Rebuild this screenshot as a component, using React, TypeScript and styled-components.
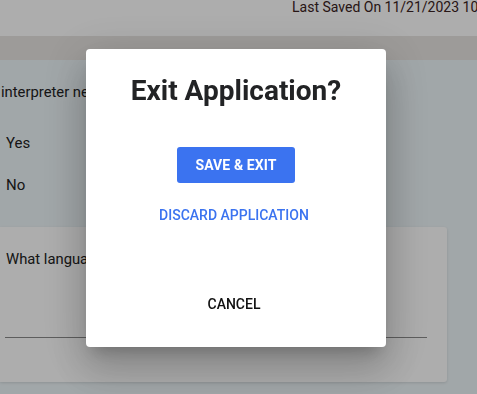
import React from "react";
import styled, { createGlobalStyle } from "styled-components";

const Global = createGlobalStyle`
  html, body { margin: 0; padding: 0; }
  body {
    width: 477px;
    height: 394px;
    overflow: hidden;
    font-family: Roboto, "Liberation Sans", sans-serif;
    background: #eef6f9;
  }
`;

const Page = styled.div`
  width: 477px;
  height: 394px;
  display: flex;
  flex-direction: column;
  overflow: hidden;
`;

const Header = styled.header`
  height: 36px;
  background: #ffffff;
  display: flex;
  justify-content: flex-start;
  padding-left: 292px;
  white-space: nowrap;
  overflow: hidden;
`;

const SavedText = styled.span`
  font-size: 14px;
  color: #3a2222;
  line-height: 14px;
`;

const Band = styled.div`
  height: 24px;
  background: #e8e5e2;
`;

const Content = styled.main`
  flex: 1;
  background: #eef6f9;
  display: flex;
  flex-direction: column;
  padding-top: 23px;
`;

const Question = styled.div`
  font-size: 14.8px;
  color: #222;
  padding-left: 1px;
  white-space: nowrap;
`;

const Options = styled.div`
  display: flex;
  flex-direction: column;
  gap: 24px;
  margin-top: 33px;
  padding-left: 6px;
`;

const Option = styled.div`
  font-size: 15px;
  color: #222;
  line-height: 18px;
`;

const Card = styled.section`
  margin-top: 33px;
  width: 447px;
  height: 155px;
  background: #ffffff;
  border-radius: 0 3px 3px 0;
  box-shadow: 0 1px 3px rgba(0, 0, 0, 0.12);
  display: flex;
  flex-direction: column;
  padding: 23px 0 0 6px;
  box-sizing: border-box;
`;

const CardLabel = styled.div`
  font-size: 14.8px;
  color: #222;
`;

const Underline = styled.div`
  margin-top: 69px;
  margin-left: -1px;
  width: 422px;
  height: 1px;
  background: #8a8a8a;
`;

const Backdrop = styled.div`
  position: fixed;
  inset: 0;
  background: rgba(0, 0, 0, 0.32);
  display: flex;
  align-items: flex-start;
  justify-content: flex-start;
  padding: 49px 0 0 86px;
`;

const Dialog = styled.div`
  width: 300px;
  height: 298px;
  box-sizing: border-box;
  background: #ffffff;
  border-radius: 4px;
  box-shadow: 0 11px 15px -7px rgba(0, 0, 0, 0.2),
    0 24px 38px 3px rgba(0, 0, 0, 0.14), 0 9px 46px 8px rgba(0, 0, 0, 0.12);
  display: flex;
  flex-direction: column;
  align-items: center;
  padding-top: 26px;
`;

const Title = styled.h2`
  margin: 0;
  font-size: 28px;
  font-weight: 700;
  color: #222325;
  line-height: 32px;
`;

const PrimaryButton = styled.button`
  margin-top: 40px;
  width: 118px;
  height: 36px;
  border: none;
  border-radius: 3px;
  background: #3b73f0;
  color: #ffffff;
  font-family: Roboto, "Liberation Sans", sans-serif;
  font-size: 14px;
  font-weight: 700;
  letter-spacing: 0.1px;
  cursor: pointer;
`;

const TextButton = styled.button<{ $tone: "primary" | "neutral"; $gap: number }>`
  margin-top: ${(p) => p.$gap}px;
  margin-right: 4px;
  border: none;
  background: transparent;
  color: ${(p) => (p.$tone === "primary" ? "#3b73f0" : "#111111")};
  font-family: Roboto, "Liberation Sans", sans-serif;
  font-size: 14px;
  font-weight: 500;
  height: 36px;
  padding: 0 8px;
  cursor: pointer;
`;

export default function App() {
  return (
    <>
      <Global />
      <Page>
        <Header>
          <SavedText>Last Saved On 11/21/2023 10:42 AM</SavedText>
        </Header>
        <Band />
        <Content>
          <Question>interpreter needed?</Question>
          <Options>
            <Option>Yes</Option>
            <Option>No</Option>
          </Options>
          <Card>
            <CardLabel>What language is needed?</CardLabel>
            <Underline />
          </Card>
        </Content>
      </Page>
      <Backdrop>
        <Dialog role="dialog">
          <Title>Exit Application?</Title>
          <PrimaryButton>SAVE &amp; EXIT</PrimaryButton>
          <TextButton $tone="primary" $gap={14}>
            DISCARD APPLICATION
          </TextButton>
          <TextButton $tone="neutral" $gap={53}>
            CANCEL
          </TextButton>
        </Dialog>
      </Backdrop>
    </>
  );
}
